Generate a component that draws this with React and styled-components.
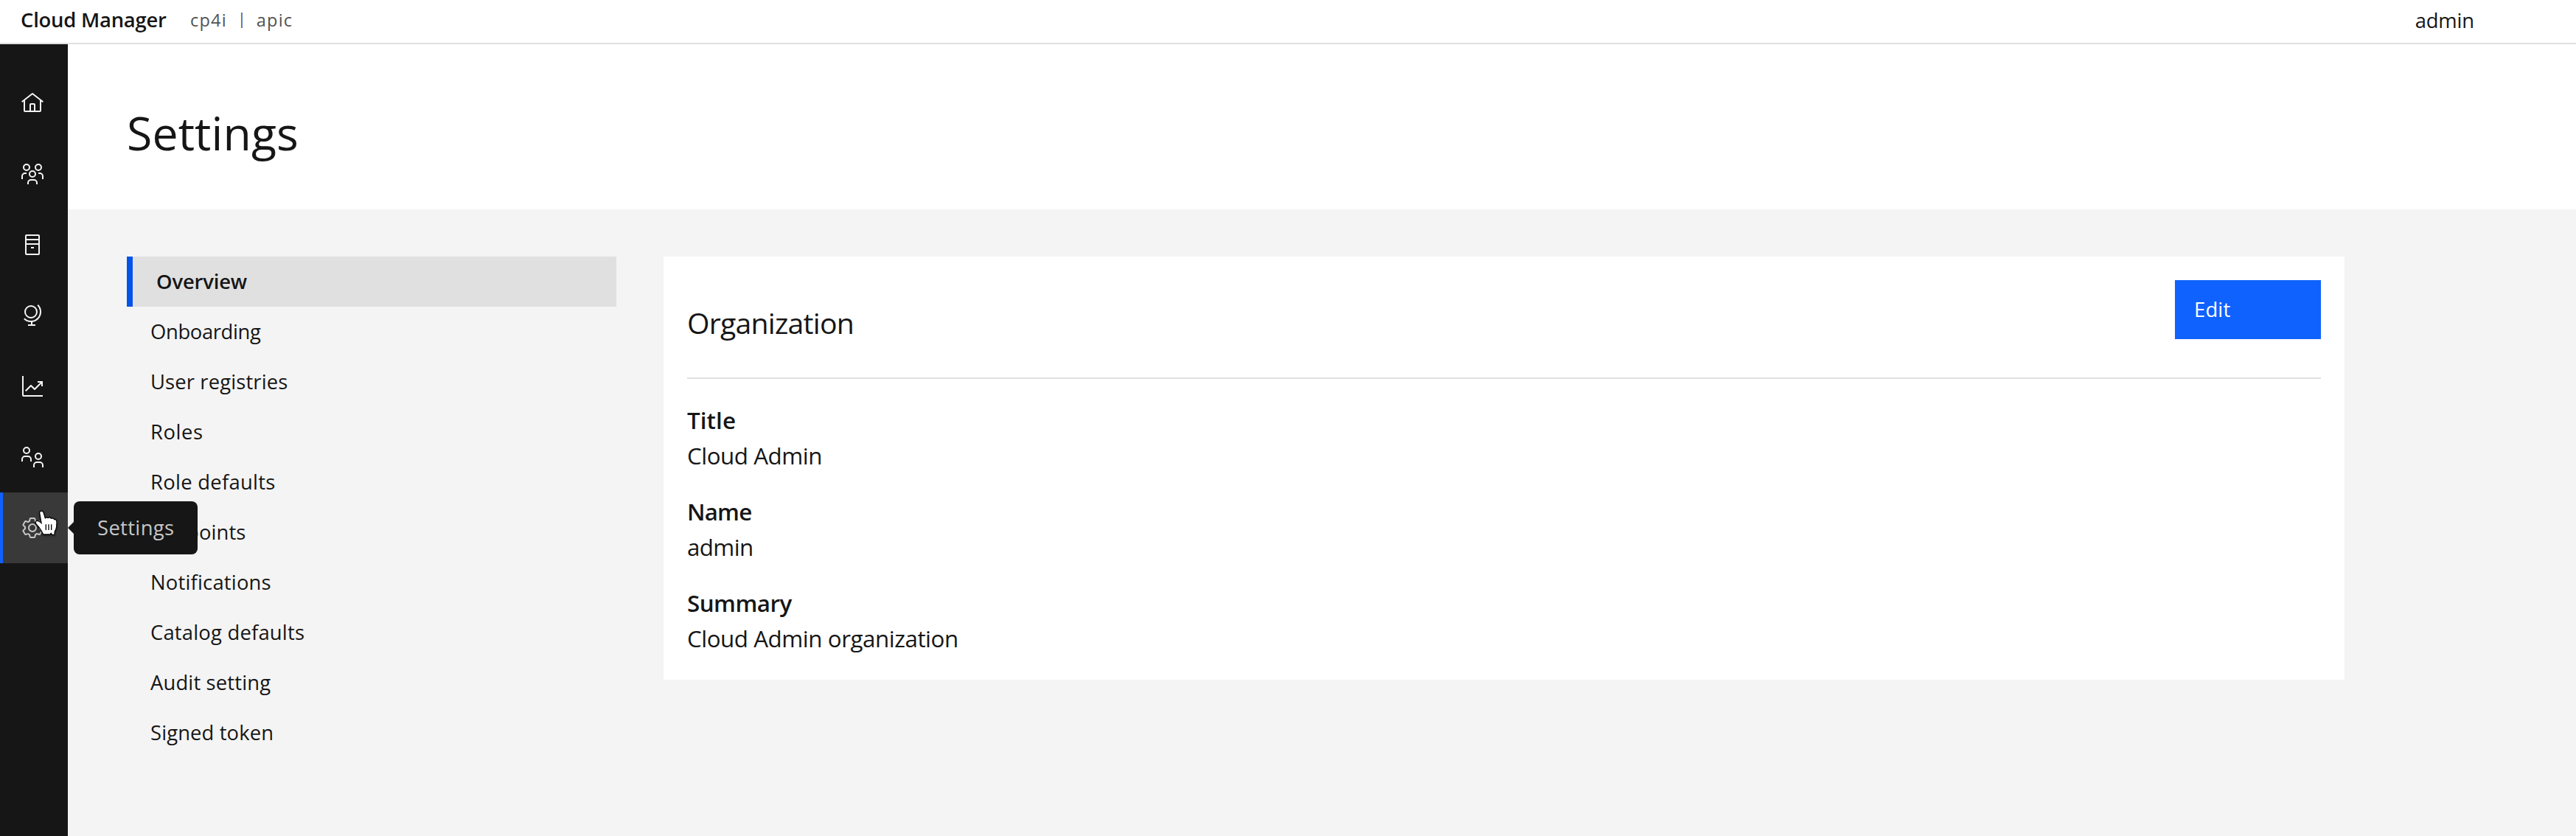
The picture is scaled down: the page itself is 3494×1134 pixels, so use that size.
import React from "react";
import styled, { createGlobalStyle, css } from "styled-components";

const Global = createGlobalStyle`
  *, *::before, *::after { box-sizing: border-box; }
  html, body { margin: 0; padding: 0; }
  body {
    background: #f4f4f4;
    color: #161616;
    font-family: "Open Sans", "Noto Sans", sans-serif;
    font-size: 27.4px;
    font-weight: 400;
    overflow: hidden;
  }
  h1, h2, dl, dt, dd, ul { margin: 0; padding: 0; font-weight: 400; }
  ul { list-style: none; }
`;

const Shell = styled.div`
  display: flex;
  flex-direction: column;
  width: 3494px;
  height: 1134px;
`;

const Header = styled.header`
  display: flex;
  align-items: center;
  flex: none;
  height: 60px;
  padding: 0 138px 4px 28px;
  background: #ffffff;
  border-bottom: 2px solid #e0e0e0;
  line-height: 36px;
`;

const Product = styled.span`
  width: 230px;
  font-weight: 600;
  letter-spacing: -0.22px;
`;

const Crumbs = styled.div`
  display: flex;
  align-items: center;
  flex: 1;
  color: #525252;
  font-size: 23.5px;
  letter-spacing: 1.2px;
`;

const Divider = styled.span`
  width: 40px;
  margin-top: -4px;
  font-size: 21.5px;
  letter-spacing: 0;
  text-align: center;
`;

const UserName = styled.span`
  padding-top: 2px;
  letter-spacing: -0.15px;
`;

const Body = styled.div`
  display: flex;
  flex: 1;
  min-height: 0;
`;

const Rail = styled.nav`
  flex: none;
  width: 92px;
  padding-top: 32px;
  background: #161616;
`;

const RailItem = styled.div`
  position: relative;
  display: flex;
  align-items: center;
  height: 96px;
  padding-left: 28px;
  color: #f4f4f4;
  ${(p) =>
    p.$active &&
    css`
      padding-left: 24px;
      background: #393939;
      border-left: 4px solid #0f62fe;
      color: #c6c6c6;
    `}
`;

const Glyph = styled.svg`
  display: block;
  width: 32px;
  height: 32px;
  fill: currentColor;
`;

const Tooltip = styled.div`
  position: absolute;
  z-index: 2;
  left: 96px;
  top: 12px;
  width: 168px;
  height: 72px;
  padding-left: 32px;
  border-radius: 8px;
  background: #161616;
  color: #c6c6c6;
  line-height: 71px;
  letter-spacing: 0.36px;
  &::before {
    content: "";
    position: absolute;
    left: -8px;
    top: 28px;
    border: 8px solid transparent;
    border-left-width: 0;
    border-right-color: #161616;
  }
`;

const Pointer = styled.svg`
  position: absolute;
  z-index: 3;
  left: 20px;
  top: 16px;
  width: 60px;
  height: 60px;
  overflow: visible;
  filter: drop-shadow(0 1px 1px rgba(0, 0, 0, 0.6));
`;

const Main = styled.main`
  display: flex;
  flex-direction: column;
  flex: 1;
`;

const TitleBar = styled.div`
  height: 224px;
  padding: 80px 80px 0;
  background: #ffffff;
`;

const PageTitle = styled.h1`
  font-size: 62.6px;
  line-height: 80px;
  letter-spacing: 0.1px;
`;

const Content = styled.div`
  display: flex;
  align-items: flex-start;
  gap: 64px;
  flex: 1;
  padding: 64px 80px 0;
  background: #f4f4f4;
`;

const SideMenu = styled.ul`
  flex: none;
  width: 664px;
`;

const MenuItem = styled.li`
  height: 68px;
  padding: 16px 32px;
  line-height: 36px;
  letter-spacing: ${(p) => p.$tracking}px;
  ${(p) =>
    p.$active &&
    css`
      background: #e0e0e0;
      border-left: 8px solid #0353e9;
      font-weight: 600;
    `}
`;

const Card = styled.section`
  width: 2280px;
  padding: 32px;
  background: #ffffff;
`;

const CardHead = styled.div`
  display: flex;
  align-items: flex-start;
  justify-content: space-between;
  height: 134px;
  margin-bottom: 32px;
  border-bottom: 2px solid #e0e0e0;
`;

const CardTitle = styled.h2`
  margin-top: 30px;
  font-size: 39.2px;
  line-height: 56px;
  letter-spacing: -0.75px;
`;

const Button = styled.button`
  width: 198px;
  height: 80px;
  padding: 0 0 1px 26px;
  border: 0;
  background: #0f62fe;
  color: #ffffff;
  font: inherit;
  letter-spacing: 0.17px;
  text-align: left;
`;

const Details = styled.dl`
  display: flex;
  flex-direction: column;
  gap: 28px;
  font-size: 31.3px;
  line-height: 48px;
`;

const Term = styled.dt`
  font-weight: 600;
  letter-spacing: ${(p) => p.$tracking}px;
`;

const Value = styled.dd`
  letter-spacing: ${(p) => p.$tracking}px;
`;

const person =
  "a5,5,0,1,0,5,5a5,5,0,0,0,-5,-5Zm0,8a3,3,0,1,1,3,-3a3,3,0,0,1,-3,3Z";

const HomeIcon = () => (
  <Glyph viewBox="0 0 32 32">
    <path d="M16.6123,2.2138a1.01,1.01,0,0,0-1.2427,0L1,13.4194l1.2427,1.5717L4,13.6208V26a2.0041,2.0041,0,0,0,2,2H26a2.0037,2.0037,0,0,0,2-2V13.63L29.7573,15,31,13.4282ZM18,26H14V18h4Zm2,0V18a2.0023,2.0023,0,0,0-2-2H14a2.002,2.002,0,0,0-2,2v8H6V12.0615l10-7.79,10,7.8005V26Z" />
  </Glyph>
);

const MembersIcon = () => (
  <Glyph viewBox="0 0 32 32">
    <path d="M26,14H24v2h2a3,3,0,0,1,3,3v4h2V19A5,5,0,0,0,26,14Z" />
    <path d={"M24,2" + person} />
    <path d="M23,30H21V28a3,3,0,0,0-3-3H14a3,3,0,0,0-3,3v2H9V28a5,5,0,0,1,5-5h4a5,5,0,0,1,5,5Z" />
    <path d={"M16,11" + person} />
    <path d="M8,14H6a5,5,0,0,0-5,5v4H3V19a3,3,0,0,1,3-3H8Z" />
    <path d={"M8,2" + person} />
  </Glyph>
);

const ServerIcon = () => (
  <Glyph viewBox="0 0 32 32">
    <rect x="14" y="19" width="4" height="2" />
    <path d="M24,2H8A2,2,0,0,0,6,4V28a2,2,0,0,0,2,2H24a2,2,0,0,0,2-2V4A2,2,0,0,0,24,2Zm0,26H8V16H24Zm0-14H8V10H24Zm0-6H8V4H24Z" />
  </Glyph>
);

const GlobeIcon = () => (
  <Glyph viewBox="0 0 32 32">
    <g fill="none" stroke="currentColor" strokeWidth="2">
      <circle cx="14" cy="11" r="8" />
      <path d="M23.2,1.8A13,13,0,0,1,4.8,20.2" />
      <path d="M15,24V29M10,29H20" />
    </g>
  </Glyph>
);

const AnalyticsIcon = () => (
  <Glyph viewBox="0 0 32 32">
    <path d="M4,2H2V28a2,2,0,0,0,2,2H30V28H4Z" />
    <path d="M30,9H23v2h3.59L19,18.59l-4.29-4.3a1,1,0,0,0-1.42,0L6,21.59,7.41,23,14,16.41l4.29,4.3a1,1,0,0,0,1.42,0L28,12.41V16h2Z" />
  </Glyph>
);

const PartnersIcon = () => (
  <Glyph viewBox="0 0 32 32">
    <path d={"M8,2" + person} />
    <path d="M15,22H13V19a3,3,0,0,0-3-3H6a3,3,0,0,0-3,3v3H1V19a5,5,0,0,1,5-5h4a5,5,0,0,1,5,5Z" />
    <path d={"M24,10" + person} />
    <path d="M31,30H29V27a3,3,0,0,0-3-3H22a3,3,0,0,0-3,3v3H17V27a5,5,0,0,1,5-5h4a5,5,0,0,1,5,5Z" />
  </Glyph>
);

const GearIcon = () => (
  <Glyph viewBox="0 0 32 32">
    <path d="M27,16.76c0-.25,0-.5,0-.76s0-.51,0-.77l1.92-1.68A2,2,0,0,0,29.3,11L26.94,7a2,2,0,0,0-1.73-1,2,2,0,0,0-.64.1l-2.43.82a11.35,11.35,0,0,0-1.31-.75l-.51-2.52a2,2,0,0,0-2-1.61H13.64a2,2,0,0,0-2,1.61l-.51,2.52a11.48,11.48,0,0,0-1.32.75L7.43,6.06A2,2,0,0,0,6.79,6,2,2,0,0,0,5.06,7L2.7,11a2,2,0,0,0,.41,2.51L5,15.24c0,.25,0,.5,0,.76s0,.51,0,.77L3.11,18.45A2,2,0,0,0,2.7,21L5.06,25a2,2,0,0,0,1.73,1,2,2,0,0,0,.64-.1l2.43-.82a11.35,11.35,0,0,0,1.31.75l.51,2.52a2,2,0,0,0,2,1.61h4.72a2,2,0,0,0,2-1.61l.51-2.52a11.48,11.48,0,0,0,1.32-.75l2.42.82a2,2,0,0,0,.64.1,2,2,0,0,0,1.73-1L29.3,21a2,2,0,0,0-.41-2.51ZM25.21,24l-3.43-1.16a8.86,8.86,0,0,1-2.71,1.57L18.36,28H13.64l-.71-3.55a9.36,9.36,0,0,1-2.7-1.57L6.79,24,4.43,20l2.72-2.4a8.9,8.9,0,0,1,0-3.13L4.43,12,6.79,8l3.43,1.16a8.86,8.86,0,0,1,2.71-1.57L13.64,4h4.72l.71,3.55a9.36,9.36,0,0,1,2.7,1.57L25.21,8,27.57,12l-2.72,2.4a8.9,8.9,0,0,1,0,3.13L27.57,20Z" />
    <path d="M16,22a6,6,0,1,1,6-6A5.94,5.94,0,0,1,16,22Zm0-10a3.91,3.91,0,0,0-4,4,3.91,3.91,0,0,0,4,4,3.91,3.91,0,0,0,4-4A3.91,3.91,0,0,0,16,12Z" />
  </Glyph>
);

const HandPointer = () => (
  <Pointer viewBox="0 0 180 180">
    <path
      d="M91 36Q90 29 97 29Q102 29 104 36L111 60Q116 52 123 58Q130 52 136 60Q144 55 148 64Q157 61 157 73L156 92Q154 104 149 110L148 122L141 122L136 115L131 121L105 121Q100 108 88 92L76 79Q72 70 80 69Q88 70 99 82Z"
      fill="#ffffff"
      stroke="#000000"
      strokeWidth="7"
      strokeLinejoin="round"
      paintOrder="stroke"
    />
    <path d="M115 82V105M126 82V105M137 82V105" stroke="#000000" strokeWidth="4" />
  </Pointer>
);

const railIcons = [HomeIcon, MembersIcon, ServerIcon, GlobeIcon, AnalyticsIcon, PartnersIcon];

const menu = [
  { label: "Overview", tracking: -0.15, active: true },
  { label: "Onboarding", tracking: -0.36 },
  { label: "User registries", tracking: 0.13 },
  { label: "Roles", tracking: 0.6 },
  { label: "Role defaults", tracking: 0.28 },
  { label: "Endpoints", tracking: 0.1 },
  { label: "Notifications", tracking: 0.2 },
  { label: "Catalog defaults", tracking: 0.2 },
  { label: "Audit setting", tracking: 0.15 },
  { label: "Signed token", tracking: 0.12 },
];

const details = [
  { term: "Title", value: "Cloud Admin", termTracking: 0.1, valueTracking: -0.44 },
  { term: "Name", value: "admin", termTracking: -0.8, valueTracking: -0.6 },
  { term: "Summary", value: "Cloud Admin organization", termTracking: -0.5, valueTracking: -0.44 },
];

export default function App() {
  return (
    <Shell>
      <Global />
      <Header>
        <Product>Cloud Manager</Product>
        <Crumbs>
          <span>cp4i</span>
          <Divider>|</Divider>
          <span>apic</span>
        </Crumbs>
        <UserName>admin</UserName>
      </Header>
      <Body>
        <Rail>
          {railIcons.map((Icon, i) => (
            <RailItem key={i}>
              <Icon />
            </RailItem>
          ))}
          <RailItem $active>
            <GearIcon />
            <Tooltip>Settings</Tooltip>
            <HandPointer />
          </RailItem>
        </Rail>
        <Main>
          <TitleBar>
            <PageTitle>Settings</PageTitle>
          </TitleBar>
          <Content>
            <SideMenu>
              {menu.map((m) => (
                <MenuItem key={m.label} $active={m.active} $tracking={m.tracking}>
                  {m.label}
                </MenuItem>
              ))}
            </SideMenu>
            <Card>
              <CardHead>
                <CardTitle>Organization</CardTitle>
                <Button type="button">Edit</Button>
              </CardHead>
              <Details>
                {details.map((d) => (
                  <div key={d.term}>
                    <Term $tracking={d.termTracking}>{d.term}</Term>
                    <Value $tracking={d.valueTracking}>{d.value}</Value>
                  </div>
                ))}
              </Details>
            </Card>
          </Content>
        </Main>
      </Body>
    </Shell>
  );
}
